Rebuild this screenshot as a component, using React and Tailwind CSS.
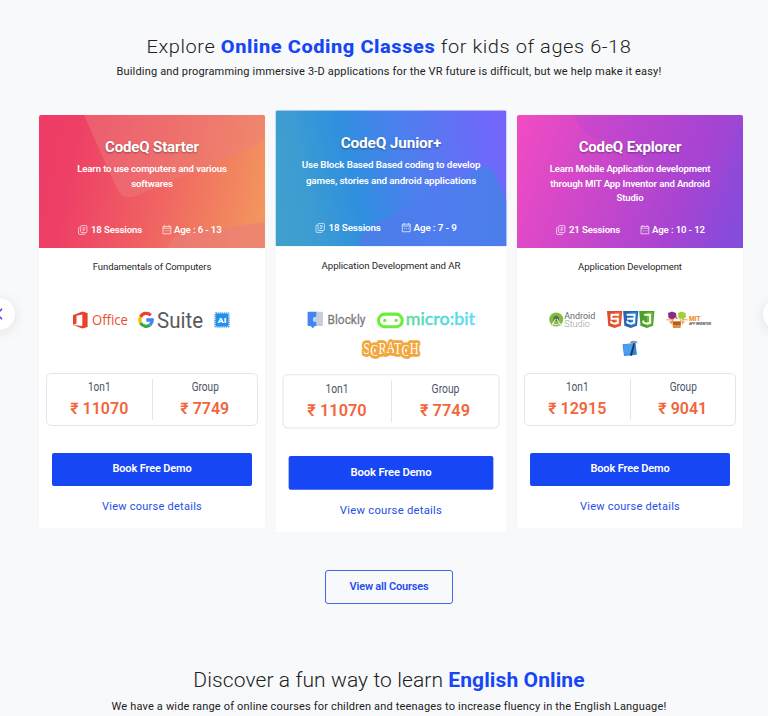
import React from "react";

const Fit = ({ w, x = 0, y, size, weight = 400, fill, family = "Roboto, sans-serif", children, ...rest }) => (
  <text x={x} y={y} fontSize={size} fontWeight={weight} fill={fill} fontFamily={family} textLength={w} lengthAdjust="spacingAndGlyphs" {...rest}>
    {children}
  </text>
);

const OfficeLogo = () => (
  <svg className="overflow-visible" width="56" height="20" viewBox="0 0 56 20">
    <path d="M0 5.2 9.3 1.6 14.6 3.1V16.9L9.3 18.4 0 15 9.3 16.1V4.4L3.5 5.8V13.6L0 15Z" fill="#e8432a" />
    <Fit x={19} y={15} w={36} size={15} fill="#e8502f" family="'Open Sans', sans-serif">Office</Fit>
  </svg>
);

const GSuiteLogo = () => (
  <svg className="overflow-visible" width="66" height="24" viewBox="0 0 66 24">
    <g fill="none" strokeWidth="3.3">
      <path d="M12.7 7.2A6.3 6.3 0 0 0 2.6 9" stroke="#ea4335" />
      <path d="M2.6 9A6.3 6.3 0 0 0 2.6 15" stroke="#fbbc05" />
      <path d="M2.6 15A6.3 6.3 0 0 0 12 17" stroke="#34a853" />
      <path d="M12 17A6.3 6.3 0 0 0 14.2 12H8.3" stroke="#4285f4" />
    </g>
    <Fit x={19} y={20} w={46} size={22} fill="#58595c">Suite</Fit>
  </svg>
);

const AiLogo = () => (
  <svg className="ml-px overflow-visible" width="16" height="18" viewBox="0 0 16 18">
    <rect x="1.2" y="2.2" width="13.6" height="13.6" rx="1" fill="none" stroke="#5aa3e8" strokeWidth="2" strokeDasharray="1.1 .8" />
    <rect x="1.6" y="2.6" width="12.8" height="12.8" rx="1.5" fill="#258fec" />
    <Fit x={3.8} y={11.7} w={8.5} size={7.5} weight={900} fill="#fff">AI</Fit>
  </svg>
);

const BlocklyLogo = () => (
  <svg className="overflow-visible" width="58" height="20" viewBox="0 0 58 20">
    <path d="M7 2H14.5a1 1 0 0 1 1 1V15a1 1 0 0 1-1 1H7Z" fill="#c6cede" />
    <path d="M1.5 2H9V6.5L6.2 7.5V11.5L9 12.3V16H7.6L5.6 18.2 3.5 16H1.5a1 1 0 0 1-1-1V3a1 1 0 0 1 1-1Z" fill="#4285f4" />
    <Fit x={20} y={14.4} w={37} size={13} fill="#77797d" stroke="#77797d" strokeWidth="0.25">Blockly</Fit>
  </svg>
);

const MicrobitLogo = () => (
  <svg className="overflow-visible" width="97" height="20" viewBox="0 0 97 20">
    <defs>
      <linearGradient id="mb" x1="0" x2="1"><stop offset="0" stopColor="#5edc9c" /><stop offset=".5" stopColor="#52d9dc" /><stop offset="1" stopColor="#62dcf7" /></linearGradient>
    </defs>
    <rect x="1.8" y="4.3" width="23.2" height="12.4" rx="6.2" fill="none" stroke="#6ced3b" strokeWidth="3" />
    <circle cx="7.9" cy="10.5" r="1.6" fill="#6ced3b" /><circle cx="19" cy="10.5" r="1.6" fill="#6ced3b" />
    <Fit x={28.5} y={15} w={67.5} size={17} weight={500} fill="url(#mb)" stroke="url(#mb)" strokeWidth="0.4" family="Lato, sans-serif">micro:bit</Fit>
  </svg>
);

const ScratchLogo = () => (
  <svg className="overflow-visible" width="60" height="20" viewBox="0 0 60 20">
    <text x="3" y="15.5" dy="0 1.5 -1.5 -1 1 1.5 -1.5" fontFamily="'Liberation Serif', serif" fontSize="16" fontWeight="400" textLength="54" lengthAdjust="spacingAndGlyphs" fill="#fff" stroke="#f3a63b" strokeWidth="5.5" strokeLinejoin="round" paintOrder="stroke">SCRATCH</text>
  </svg>
);

const AndroidLogo = () => (
  <svg className="overflow-visible" width="48" height="22" viewBox="0 0 48 22">
    <circle cx="8.2" cy="10.5" r="7" fill="#83b93c" />
    <path d="M5.5 9.5a2.7 2.7 0 0 1 5.4 0v2.5H5.5Z" fill="#55704a" />
    <path d="m7.5 10-4 7.5M9 10l4.5 7.5" stroke="#dfe6dc" strokeWidth="1.2" />
    <path d="M4 14a7 7 0 0 0 8.5 0" stroke="#eef5e8" fill="none" />
    <Fit x={16.3} y={10.2} w={31} size={9} fill="#67696b">Android</Fit>
    <Fit x={16.3} y={17.8} w={25.5} size={8.5} weight={300} fill="#999b9d">Studio</Fit>
  </svg>
);

const Shield = ({ x, dark, light, d }) => (
  <g transform={`translate(${x} 0)`}>
    <path d="M0 0H15.2L13.9 14.8 7.6 17 1.3 14.8Z" fill={dark} />
    <path d="M7.6 1.3H13.9L12.7 13.8 7.6 15.5Z" fill={light} />
    <path d={d} fill="none" stroke="#fff" strokeWidth="1.9" />
  </g>
);

const WebLogo = () => (
  <svg width="48" height="18" viewBox="0 0 48 18">
    <Shield x={0} dark="#dc4b2c" light="#ee6740" d="M12 3.7H4.5V7.7H10.8V11.7L7.6 12.7 4.2 11.6V9.8" />
    <Shield x={16.1} dark="#2367b2" light="#3187d4" d="M3.5 3.7H11.5L10.9 11.7 7.6 12.7 4.3 11.6V9.8M4 7.7H11" />
    <Shield x={32.2} dark="#4c9f2a" light="#6bbd37" d="M5 3.7H10.8V11.7L7.6 12.7 4.2 11.6V9.5" />
  </svg>
);

const MitLogo = () => (
  <svg className="overflow-visible" width="46" height="20" viewBox="0 0 46 20">
    <path d="m2 3 4-1.5L10 3 10.5 7 6.5 9.5 2.5 8Z" fill="#882d80" />
    <path d="M12 3 15.5 1.5 19.5 3 20 7 17 9.5 12.5 8Z" fill="#a0d13c" />
    <path d="M.3 9.8H6M16 9.8H21.5" stroke="#e69b4f" />
    <path d="m6 10 4.5-3L15.5 10 14.5 18H7Z" fill="#f08b2d" />
    <path d="M6.8 11 9 8l1.8 1.5L12.6 8l2.2 3Z" fill="#fff" /><path d="M7 12h7.6v3H7Z" fill="#9b643b" />
    <path d="m3 12 3-1.5v4ZM19 12l-3-1.5v4Z" fill="#f3a156" />
    <Fit x={23} y={11.4} w={11.5} size={7} weight={900} fill="#f4902c">MIT</Fit>
    <Fit x={23} y={15.2} w={22} size={2.8} weight={900} fill="#545454">APP INVENTOR</Fit>
  </svg>
);

const XcodeLogo = () => (
  <svg width="18" height="18" viewBox="0 0 18 18">
    <path d="m1.5 4.2 13-1.1 1.4 11.6L3 16Z" fill="#2a87e6" />
    <path d="m2 4.6 10-.9-3 10L3.5 15Z" fill="#4a9ff0" />
    <path d="m12.6 3-3.6 12.5 2 .3L14 3Z" fill="#263445" />
    <path d="M9 2q3-2 7-.5l.5 1.8L9.5 3Z" fill="#8f989f" />
  </svg>
);

const SessionsIcon = () => (
  <svg width="10" height="10" viewBox="0 0 10 10" fill="none" stroke="#fff" strokeWidth=".75" strokeOpacity=".9">
    <rect x="2.7" y=".6" width="6.2" height="7" rx="1" />
    <path d="M1.8 2.4h-.4a.8.8 0 0 0-.8.8v5.3c0 .5.4.9.9.9h4.8c.5 0 .8-.4.8-.8M4.5 2.8h2.8M4.5 4.2h2.8M4.5 5.6h1.8" />
  </svg>
);

const CalendarIcon = () => (
  <svg width="10" height="10" viewBox="0 0 10 10" fill="none" stroke="#fff" strokeWidth=".75" strokeOpacity=".9">
    <path d="M1 1.4h7.8v7.4H1ZM2.7.2v1.6M7.1.2v1.6M1 3.2h7.8" />
    <path d="M2.7 5.8h4.8" strokeDasharray="1 .9" />
  </svg>
);

const StarterArt = () => (
  <svg className="absolute inset-0" width="226" height="133" viewBox="0 0 226 133">
    <defs>
      <linearGradient id="st" gradientUnits="userSpaceOnUse" x1="0" y1="40" x2="226" y2="85"><stop offset="0" stopColor="#ee3c66" /><stop offset=".15" stopColor="#ee4066" /><stop offset=".55" stopColor="#f06462" /><stop offset="1" stopColor="#f3955e" /></linearGradient>
    </defs>
    <rect width="226" height="133" fill="url(#st)" />
    <path d="M45 0 77 72Q82 84 94 82L206 35Q227 29 226 17V0Z" fill="#ea7f7c" fillOpacity=".45" />
    <path d="M129 133Q132 121 146 118L226 107V133Z" fill="#ea7f7c" fillOpacity=".6" />
  </svg>
);

const JuniorArt = () => (
  <svg className="absolute inset-0" width="226" height="133" viewBox="0 0 226 133">
    <defs>
      <linearGradient id="jr" gradientUnits="userSpaceOnUse" x1="0" y1="80" x2="220" y2="30"><stop offset="0" stopColor="#3fa0ce" /><stop offset=".13" stopColor="#3c9cd2" /><stop offset=".34" stopColor="#2f8fdf" /><stop offset=".58" stopColor="#4c80ee" /><stop offset="1" stopColor="#7265fa" /></linearGradient>
      <linearGradient id="jb" x1="0" x2="1"><stop offset="0" stopColor="#4c7ce8" /><stop offset=".5" stopColor="#4f7def" /><stop offset="1" stopColor="#4780e8" /></linearGradient>
    </defs>
    <rect width="226" height="133" fill="url(#jr)" />
    <path d="M82 133Q81 120 98 111L198 56Q209 52 214 62L226 88V133Z" fill="url(#jb)" fillOpacity=".9" />
  </svg>
);

const ExplorerArt = () => (
  <svg className="absolute inset-0" width="226" height="133" viewBox="0 0 226 133">
    <defs>
      <linearGradient id="ex" gradientUnits="userSpaceOnUse" x1="0" y1="15" x2="226" y2="95"><stop offset="0" stopColor="#f04bc3" /><stop offset=".4" stopColor="#c947cb" /><stop offset=".75" stopColor="#a744d2" /><stop offset="1" stopColor="#854bdb" /></linearGradient>
    </defs>
    <rect width="226" height="133" fill="url(#ex)" />
    <path d="M58 0Q64 22 90 27L190 76Q198 78 204 64L226 8V0Z" fill="#a943d3" fillOpacity=".28" />
  </svg>
);

const courses = [
  {
    name: "CodeQ Starter", lines: ["Learn to use computers and various", "softwares"], sessions: "18 Sessions", age: "Age : 6 - 13",
    topic: "Fundamentals of Computers", solo: "11070", group: "7749", Art: StarterArt,
    logos: <div className="flex h-[24px] items-center justify-center gap-[9px] pr-[2px]"><OfficeLogo /><GSuiteLogo /><AiLogo /></div>,
  },
  {
    name: "CodeQ Junior+", lines: ["Use Block Based Based coding to develop", "games, stories and android applications"], sessions: "18 Sessions", age: "Age : 7 - 9",
    topic: "Application Development and AR", solo: "11070", group: "7749", Art: JuniorArt, featured: true,
    logos: <><div className="flex h-[24px] items-center justify-center gap-[10px] pl-px"><BlocklyLogo /><MicrobitLogo /></div><div className="mt-[6px] flex justify-center"><ScratchLogo /></div></>,
  },
  {
    name: "CodeQ Explorer", lines: ["Learn Mobile Application development", "through MIT App Inventor and Android", "Studio"], sessions: "21 Sessions", age: "Age : 10 - 12",
    topic: "Application Development", solo: "12915", group: "9041", Art: ExplorerArt,
    logos: <><div className="flex h-[24px] items-center justify-center gap-[11px]"><AndroidLogo /><WebLogo /><MitLogo /></div><div className="mt-[8px] flex justify-center"><XcodeLogo /></div></>,
  },
];

const Price = ({ label, value }) => (
  <div className="flex-1 text-center">
    <div className="origin-center scale-x-[.84] scale-y-[1.08] text-[12px] leading-[14px] text-[#4b5269]">{label}</div>
    <div className="mt-[5px] text-[16px] leading-[20px] font-semibold text-[#f2653a]">₹ {value}</div>
  </div>
);

const CourseCard = ({ c }) => (
  <article className={"flex h-[413px] w-[226px] flex-col overflow-hidden rounded-[2px] bg-white shadow-[0_0_2px_rgba(0,0,0,0.04)] " + (c.featured ? "scale-[1.0235]" : "")}>
    <header className="relative h-[133px] shrink-0 text-center text-white">
      <c.Art />
      <div className="relative flex h-full flex-col pt-[21px]">
        <h3 className="text-[15px] leading-[22px] font-bold tracking-[-0.15px] [text-shadow:0_1px_2px_rgba(0,0,0,0.35)]">{c.name}</h3>
        <p className="mt-[4px] text-[9.6px] leading-[14.7px] font-semibold tracking-[-0.13px]">
          {c.lines.map((l) => <span key={l} className="block whitespace-nowrap">{l}</span>)}
        </p>
        <div className="mt-auto mb-[11px] flex h-[14px] items-center pl-[39px] text-left text-[9.6px] font-semibold tracking-[-0.13px] whitespace-nowrap">
          <div className="flex w-[84px] items-center gap-[3px]"><SessionsIcon />{c.sessions}</div>
          <div className="flex items-center gap-[2px]"><CalendarIcon />{c.age}</div>
        </div>
      </div>
    </header>
    <p className="mt-[11px] text-center text-[9.5px] leading-[15px] tracking-[-0.08px] text-[#272727]">{c.topic}</p>
    <div className="mt-[34px] h-[65px]">{c.logos}</div>
    <div className="mx-[7px] flex h-[53px] shrink-0 rounded-[5px] border border-[#e3e5ec] py-[6px]">
      <Price label="1on1" value={c.solo} />
      <div className="-my-px w-px bg-[#e3e5ec]" />
      <Price label="Group" value={c.group} />
    </div>
    <button className="mx-[13.3px] mt-[27px] h-[33px] shrink-0 rounded-[2px] bg-[#1746f5] text-[11px] font-semibold tracking-[-0.15px] text-white">Book Free Demo</button>
    <a className="mt-[13px] text-center text-[11px] leading-[16px] tracking-[0.25px] text-[#2450e9]">View course details</a>
  </article>
);

export default function App() {
  return (
    <main className="relative h-[716px] w-[768px] overflow-hidden bg-[#f8f9fb] font-[Roboto,sans-serif] text-[#212121]">
      <h1 className="pt-[32px] pl-[10px] text-center text-[20px] leading-[30px] font-light tracking-[0.57px] whitespace-nowrap">
        <span className="inline-block origin-center scale-y-[.9]">Explore <b className="font-extrabold text-[#1746f5]">Online Coding Classes</b> for kids of ages 6-18</span>
      </h1>
      <p className="mt-[2px] pl-[10px] text-center text-[11px] leading-[16px] tracking-[0.17px] whitespace-nowrap">Building and programming immersive 3-D applications for the VR future is difficult, but we help make it easy!</p>
      <section className="mt-[35px] flex gap-[13px] pl-[39px]">
        {courses.map((c) => <CourseCard key={c.name} c={c} />)}
      </section>
      <div className="mt-[42px] flex justify-center pl-[10px]">
        <button className="h-[34px] w-[128px] rounded-[3px] border border-[#4469ef] text-[11px] font-semibold tracking-[-0.18px] text-[#1f4cee]">View all Courses</button>
      </div>
      <h2 className="mt-[61px] pl-[10px] text-center text-[21px] leading-[30px] font-light tracking-[0.1px] whitespace-nowrap">
        Discover a fun way to learn <b className="font-bold text-[#1746f5]">English Online</b>
      </h2>
      <p className="mt-[4px] pl-[10px] text-center text-[11px] leading-[16px] tracking-[0.17px] whitespace-nowrap">We have a wide range of online courses for children and teenages to increase fluency in the English Language!</p>
      <button aria-label="Previous" className="absolute top-[298px] left-[-17.5px] h-[32px] w-[32px] rounded-full bg-white shadow-[0_2px_14px_rgba(0,0,0,0.1)]">
        <svg className="absolute top-[10px] left-[14px] overflow-visible" width="8" height="12" viewBox="0 0 8 12"><path d="M5 .8-.2 6 5 11.2" fill="none" stroke="#4a48e8" strokeWidth="1.6" /></svg>
      </button>
      <button aria-label="Next" className="absolute top-[298px] left-[763px] h-[32px] w-[32px] rounded-full bg-white shadow-[0_2px_14px_rgba(0,0,0,0.1)]" />
    </main>
  );
}
